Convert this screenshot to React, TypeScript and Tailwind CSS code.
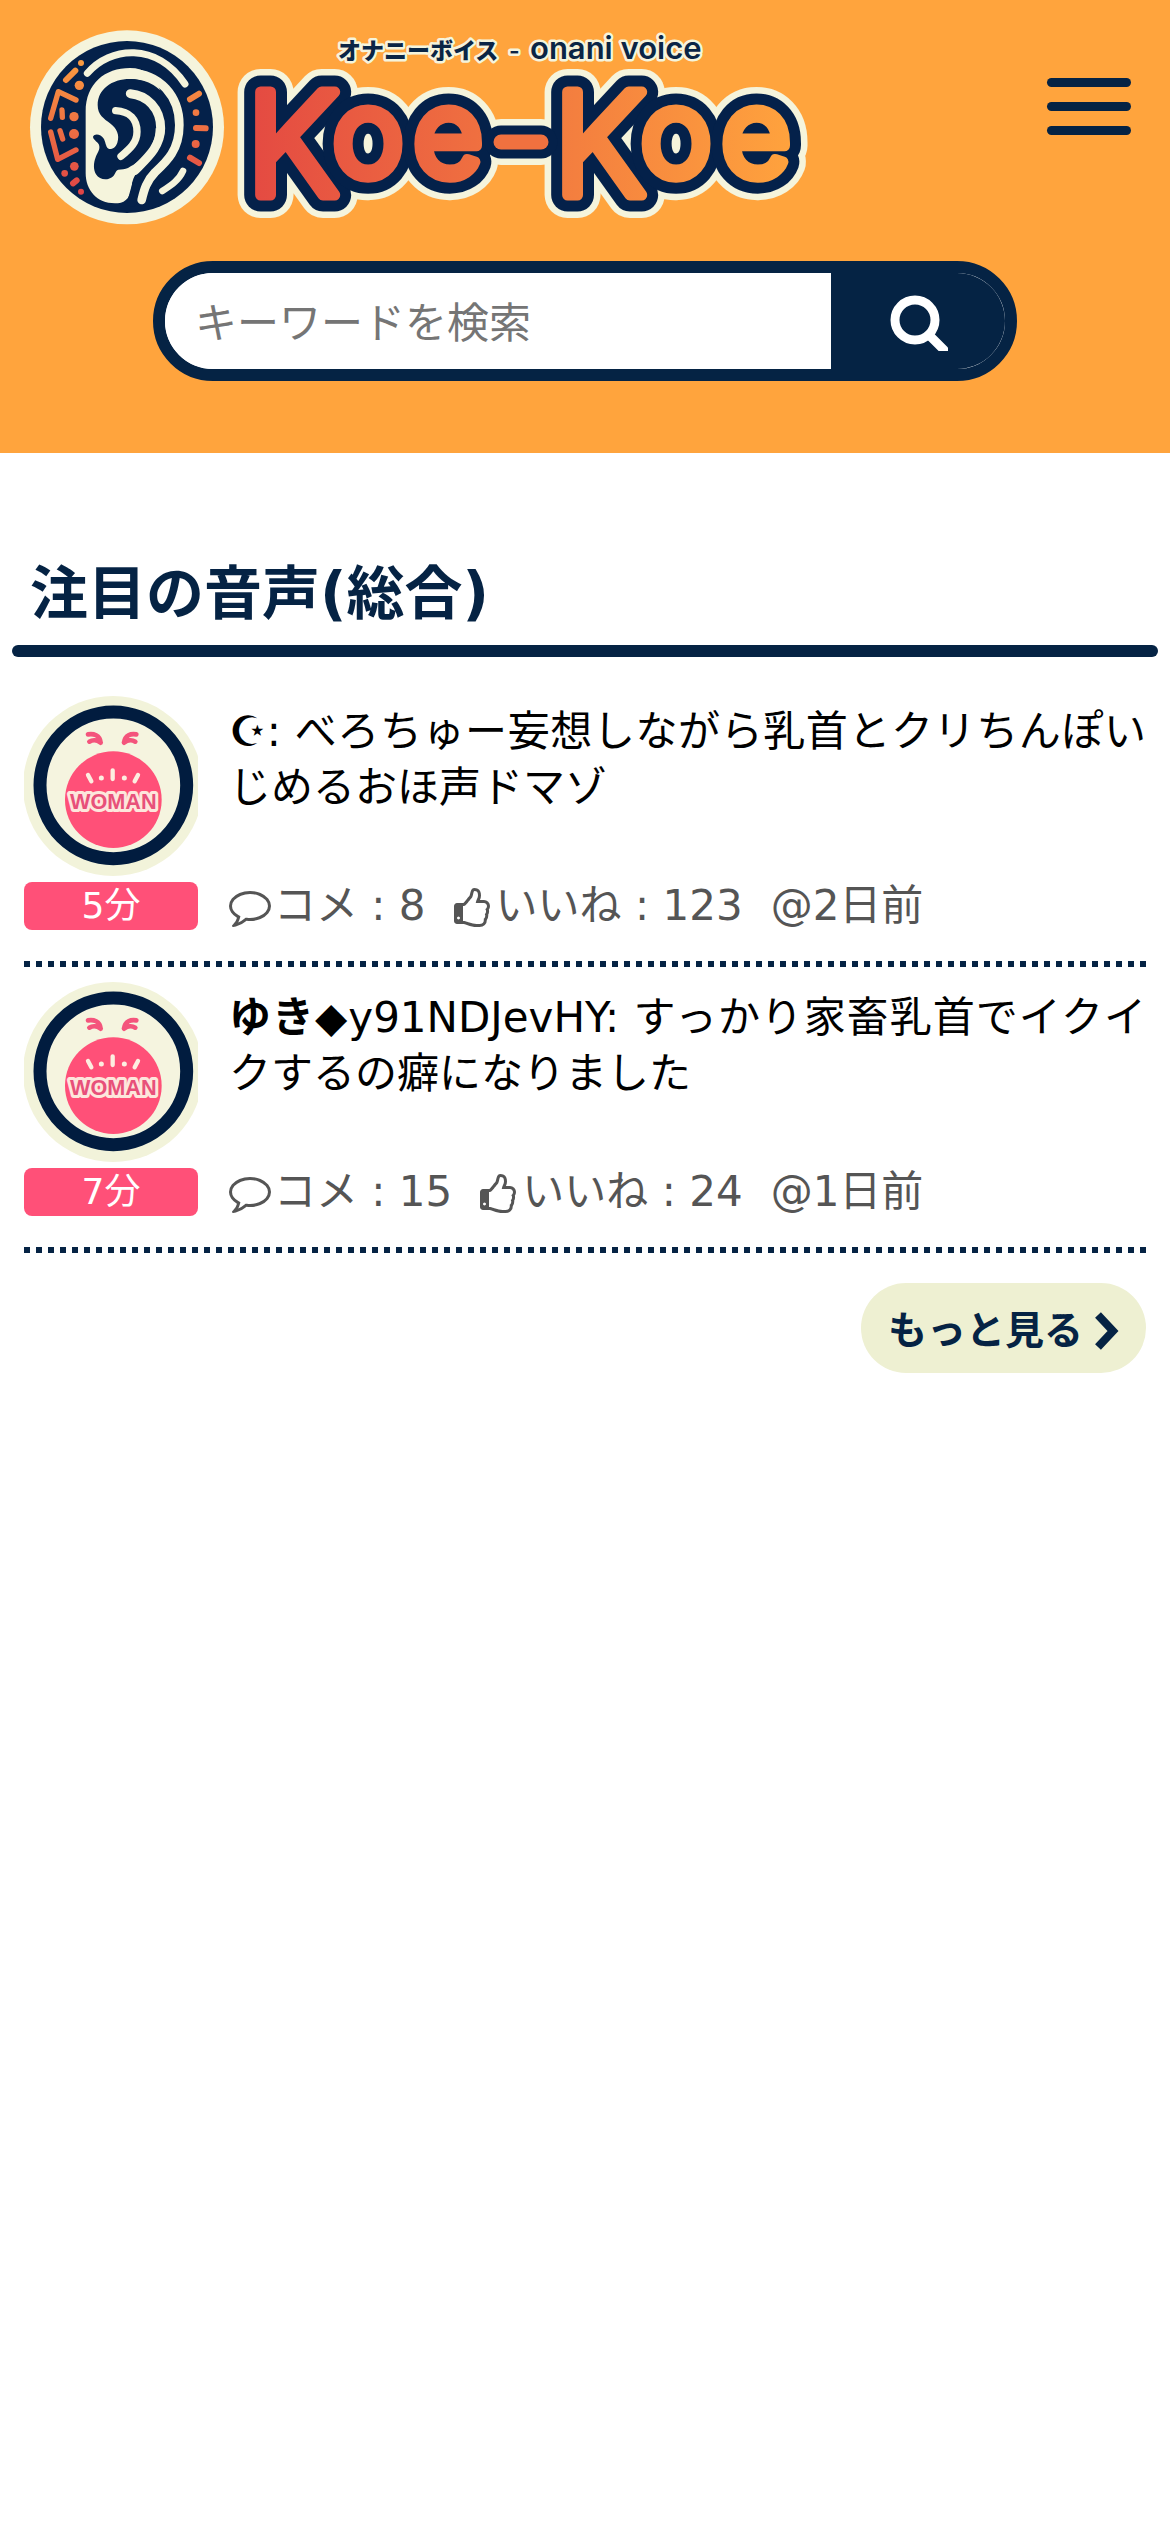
import { FormEvent } from "react";

type Voice = {
    id: number;
    name: string;
    trip?: string;
    title: string;
    minutes: number;
    comments: number;
    likes: number;
    posted: string;
};

const voices: Voice[] = [
    {
        id: 1,
        name: "☪",
        title: "べろちゅー妄想しながら乳首とクリちんぽいじめるおほ声ドマゾ",
        minutes: 5,
        comments: 8,
        likes: 123,
        posted: "2日前",
    },
    {
        id: 2,
        name: "ゆき",
        trip: "◆y91NDJevHY",
        title: "すっかり家畜乳首でイクイクするの癖になりました",
        minutes: 7,
        comments: 15,
        likes: 24,
        posted: "1日前",
    },
];

const letters = [
    { char: "K", x: 293, y: 195, size: 142 },
    { char: "o", x: 368, y: 176, size: 120 },
    { char: "e", x: 448, y: 176, size: 120 },
    { char: "K", x: 600, y: 195, size: 142 },
    { char: "o", x: 676, y: 176, size: 120 },
    { char: "e", x: 756, y: 176, size: 120 },
];

function Wordmark() {
    return (
        <>
            {letters.map(({ char, x, y, size }) => (
                <text key={x} x={x} y={y} fontSize={size} textAnchor="middle">
                    {char}
                </text>
            ))}
        </>
    );
}

function Ear() {
    return (
        <g
            transform="scale(.33333)"
            fill="none"
            strokeLinecap="round"
            strokeLinejoin="round"
        >
            <circle cx="381" cy="382" r="291" fill="#f5f4dc" />
            <circle cx="381" cy="381" r="258" fill="#04214a" />
            <path
                d="M257 335C257 250 315 204 390 204C480 204 496 300 496 380C496 460 400 490 395 560C390 600 370 610 345 610C290 610 257 570 257 520Z"
                fill="#f5f4dc"
            />
            <path
                d="M390 252C465 252 510 310 510 380C510 440 480 467 440 503C414 530 408 570 397 605"
                stroke="#04214a"
                strokeWidth="30"
            />
            <path
                d="M390 237C335 237 293 268 293 315C293 345 312 356 330 370C350 385 360 405 352 428C347 443 336 448 328 447C318 445 318 430 312 417C302 402 284 400 279 410C280 420 292 424 297 434C302 450 291 458 287 472C280 490 280 510 288 523C298 540 322 542 336 532C347 524 345 512 355 509C365 508 375 508 384 504C430 480 467 440 467 385L510 380C510 300 465 237 390 237Z"
                fill="#04214a"
            />
            <g stroke="#f5f4dc">
                <path
                    d="M273 325C282 250 330 220 390 220C480 220 538 290 538 375C538 450 500 485 465 517C440 542 432 570 425 600"
                    strokeWidth="26"
                />
                <path
                    d="M391 281C440 285 482 325 482 385C482 440 440 475 404 512"
                    strokeWidth="27"
                />
                <path
                    d="M347 332C390 334 411 360 411 395C411 428 390 446 363 469"
                    strokeWidth="22"
                />
                <path
                    d="M262 220C330 140 470 125 555 252"
                    strokeWidth="21"
                />
                <path d="M487 573C515 555 537 540 549 513" strokeWidth="20" />
            </g>
            <g stroke="url(#ear)" strokeWidth="18">
                <path d="M570 298L597 281M588 384L617 385M570 473L597 489" />
                <path d="M198 240L226 212M219 550L230 541" />
                <path
                    d="M152 355L175 275L228 300M186 330L187 352M152 396L173 478L228 450M180 392L188 417"
                    strokeWidth="16"
                />
            </g>
            <g fill="url(#ear)">
                <circle cx="588" cy="338" r="10" />
                <circle cx="587" cy="432" r="12" />
                <circle cx="243" cy="189" r="9" />
                <circle cx="238" cy="256" r="14" />
                <circle cx="222" cy="350" r="14" />
                <circle cx="222" cy="402" r="15" />
                <circle cx="223" cy="499" r="13" />
                <circle cx="194" cy="520" r="10" />
                <circle cx="243" cy="575" r="9" />
            </g>
        </g>
    );
}

function Logo() {
    return (
        <svg
            viewBox="24 24 792 204"
            className="w-full max-w-[792px]"
            role="img"
            aria-label="Koe-Koe"
        >
            <defs>
                <linearGradient
                    id="word"
                    gradientUnits="userSpaceOnUse"
                    x1="250"
                    x2="800"
                    y1="0"
                    y2="0"
                >
                    <stop stopColor="#e44a42" />
                    <stop offset="1" stopColor="#ffa43d" />
                </linearGradient>
                <linearGradient
                    id="ear"
                    gradientUnits="userSpaceOnUse"
                    x1="0"
                    x2="0"
                    y1="190"
                    y2="580"
                >
                    <stop stopColor="#fb9a40" />
                    <stop offset="1" stopColor="#df4446" />
                </linearGradient>
            </defs>
            <Ear />
            <g
                className="font-['Inter',sans-serif] font-light"
                strokeLinejoin="round"
                strokeLinecap="round"
            >
                <g fill="#f5f4dc" stroke="#f5f4dc" strokeWidth="46">
                    <Wordmark />
                    <path d="M501 142H541" />
                </g>
                <g fill="#04214a" stroke="#04214a" strokeWidth="33">
                    <Wordmark />
                    <path d="M501 142H541" />
                </g>
                <g fill="url(#word)" stroke="url(#word)" strokeWidth="11">
                    <Wordmark />
                </g>
                <path d="M501 142H541" stroke="#f0713f" strokeWidth="15" />
            </g>
            <g
                className="font-['Inter','Noto_Sans_CJK_JP',sans-serif] font-semibold"
                fill="#0a2545"
                stroke="#f5f4dc"
                strokeWidth="5"
                strokeLinejoin="round"
                paintOrder="stroke"
            >
                <text x="338" y="59" fontSize="23" className="font-black">
                    オナニーボイス
                </text>
                <text x="509" y="59" fontSize="23">
                    -
                </text>
                <text x="530" y="59" fontSize="31">
                    onani voice
                </text>
            </g>
        </svg>
    );
}

function Avatar() {
    return (
        <svg
            viewBox="42 18 522 540"
            className="w-full"
            role="img"
            aria-label="WOMAN"
        >
            <circle cx="309" cy="288" r="270" fill="#f2f3da" />
            <circle
                cx="310"
                cy="286"
                r="220"
                fill="#f5f4df"
                stroke="#011c3f"
                strokeWidth="39"
            />
            <circle cx="310" cy="329" r="145" fill="#ff5078" />
            <g
                fill="none"
                stroke="#f4547c"
                strokeWidth="14"
                strokeLinecap="round"
            >
                <path d="M234 133C250 130 270 135 272 158M238 155C248 149 262 150 272 158" />
                <path d="M379 133C363 130 345 135 342 158M376 155C366 149 352 150 342 158" />
            </g>
            <g stroke="#fdeee0" strokeWidth="13" strokeLinecap="round">
                <path d="M308 241V267M234 255L244 274M384 255L374 274" />
                <path d="M274 264h.1M343 264h.1" strokeWidth="15" />
            </g>
            <text
                x="310"
                y="356"
                fontSize="65"
                textAnchor="middle"
                className="font-['Liberation_Sans',sans-serif] font-bold"
                fill="#e8507a"
                stroke="#fde6dc"
                strokeWidth="18"
                strokeLinejoin="round"
                paintOrder="stroke"
            >
                WOMAN
            </text>
        </svg>
    );
}

function CommentIcon() {
    return (
        <svg viewBox="0 0 1792 1792" className="size-[42px]" fill="currentColor">
            <path d="M896 384q-204 0-381.5 69.5T232.5 641 128 896q0 112 71.5 213.5T401 1285l87 50-27 96q-24 91-70 172 152-63 275-171l43-38 57 6q69 8 130 8 204 0 381.5-69.5t282-187.5 104.5-255-104.5-255-282-187.5T896 384zm896 512q0 174-120 321.5t-326 233-450 85.5q-70 0-145-8-198 175-460 242-49 14-114 22h-5q-15 0-27-10.5t-16-27.5v-1q-3-4-.5-12t2-10 4.5-9.5l6-9 7-8.5 8-9q7-8 31-34.5t34.5-38 31-39.5 32.5-51 27-59 26-76q-157-89-247.5-220T0 896q0-174 120-321.5t326-233T896 256t450 85.5 326 233T1792 896z" />
        </svg>
    );
}

function LikeIcon() {
    return (
        <svg
            viewBox="0 0 1664 1792"
            className="h-[42px] w-[39px]"
            fill="currentColor"
        >
            <path d="M256 1408q0-26-19-45t-45-19-45 19-19 45 19 45 45 19 45-19 19-45zm1152-512q0-51-39-89.5t-89-38.5H928q0-58 48-159.5t48-160.5q0-98-32-145t-128-47q-26 26-38 85t-30.5 125.5T736 576q-22 23-77 91-4 5-23 30t-31.5 41-34.5 42.5-40 44-38.5 35.5-40 27-35.5 9h-32v640h32q13 0 31.5 3t33 6.5 38 11 35 11.5 35.5 12.5 29 10.5q211 73 342 73h121q192 0 192-167 0-26-5-56 30-16 47.5-52.5t17.5-73.5-18-69q53-50 53-119 0-25-10-55.5t-25-47.5q32-1 53.5-47t21.5-81zm128-1q0 89-49 163 9 33 9 69 0 77-38 144 3 21 3 43 0 101-60 178 1 139-85 219.5t-227 80.5H960q-96 0-189.5-22.5T554 1704q-116-40-138-40H128q-53 0-90.5-37.5T0 1536V896q0-53 37.5-90.5T128 768h274q36-24 137-155 58-75 107-128 24-25 35.5-85.5t30.5-126.5 62-108q39-37 90-37 84 0 151 32.5t102 101.5 35 186q0 93-48 192h176q104 0 180 76t76 179z" />
        </svg>
    );
}

function VoiceRow({ voice }: { voice: Voice }) {
    return (
        <li className="pt-[15px]">
            <a href={`#voice-${voice.id}`} className="flex gap-[31px]">
                <div className="flex w-[174px] shrink-0 flex-col gap-[6px]">
                    <Avatar />
                    <span className="h-12 rounded-lg bg-[#ff5078] text-center text-[36px] leading-[48px] text-white">
                        {voice.minutes}分
                    </span>
                </div>
                <div className="flex min-w-0 grow flex-col justify-between pt-2">
                    <p className="text-justify leading-[56px]">
                        <b>{voice.name}</b>
                        {voice.trip}: {voice.title}
                    </p>
                    <div className="flex gap-7 leading-[48px] text-[#555]">
                        <span className="flex items-center gap-[3px]">
                            <CommentIcon />
                            コメ : {voice.comments}
                        </span>
                        <span className="flex items-center gap-[3px]">
                            <LikeIcon />
                            いいね : {voice.likes}
                        </span>
                        <span>@{voice.posted}</span>
                    </div>
                </div>
            </a>
            <div className="mt-[31px] h-[6px] bg-[repeating-linear-gradient(90deg,#052344_0_6px,transparent_6px_12px)]" />
        </li>
    );
}

export default function App() {
    const onSubmit = (e: FormEvent) => e.preventDefault();

    return (
        <div
            lang="ja"
            className="min-h-screen bg-white font-['DejaVu_Sans','Noto_Sans_CJK_JP',sans-serif] text-[42px] text-black"
        >
            <header className="bg-[#ffa43d] pt-6 pb-[72px]">
                <div className="flex items-start justify-between pr-[39px] pl-6">
                    <a href="#top" className="min-w-0 grow">
                        <Logo />
                    </a>
                    <button
                        type="button"
                        aria-label="メニュー"
                        className="mt-[54px] flex w-[84px] shrink-0 flex-col gap-[15px]"
                    >
                        <span className="h-[9px] w-full rounded-full bg-[#052344]" />
                        <span className="h-[9px] w-full rounded-full bg-[#052344]" />
                        <span className="h-[9px] w-full rounded-full bg-[#052344]" />
                    </button>
                </div>
                <form
                    onSubmit={onSubmit}
                    className="mx-auto mt-[33px] flex h-[120px] w-full max-w-[864px] rounded-full border-12 border-[#052344] bg-white"
                >
                    <input
                        type="search"
                        aria-label="キーワードを検索"
                        placeholder="キーワードを検索"
                        className="min-w-0 grow rounded-l-full bg-white pt-1 pl-[30px] outline-none placeholder:text-[#757575]"
                    />
                    <button
                        type="submit"
                        aria-label="検索"
                        className="flex w-[174px] shrink-0 items-center justify-center rounded-r-full bg-[#052344]"
                    >
                        <svg
                            viewBox="0 0 60 60"
                            className="size-[60px]"
                            fill="none"
                            stroke="white"
                            strokeWidth="9"
                            strokeLinecap="round"
                        >
                            <circle cx="27" cy="29" r="20" />
                            <path d="M41 44L56 59" />
                        </svg>
                    </button>
                </form>
            </header>

            <main className="pt-[105px]">
                <h2 className="mx-3 px-[18px] text-[58px] leading-[72px] font-bold text-[#052344]">
                    注目の音声(総合)
                </h2>
                <div className="mx-3 mt-[15px] h-3 rounded-full bg-[#052344]" />
                <ul className="mt-6 px-6">
                    {voices.map((voice) => (
                        <VoiceRow key={voice.id} voice={voice} />
                    ))}
                </ul>
                <div className="mt-[30px] flex justify-end px-6">
                    <a
                        href="#more"
                        className="flex h-[90px] items-center gap-3 rounded-full bg-[#eef0d2] px-[27px] pt-[6px] text-[39px] font-bold text-[#052344]"
                    >
                        もっと見る
                        <svg
                            viewBox="0 0 24 38"
                            className="h-[38px] w-6"
                            fill="none"
                            stroke="currentColor"
                            strokeWidth="8"
                        >
                            <path d="M3 3L18 19L3 35" />
                        </svg>
                    </a>
                </div>
            </main>
        </div>
    );
}
